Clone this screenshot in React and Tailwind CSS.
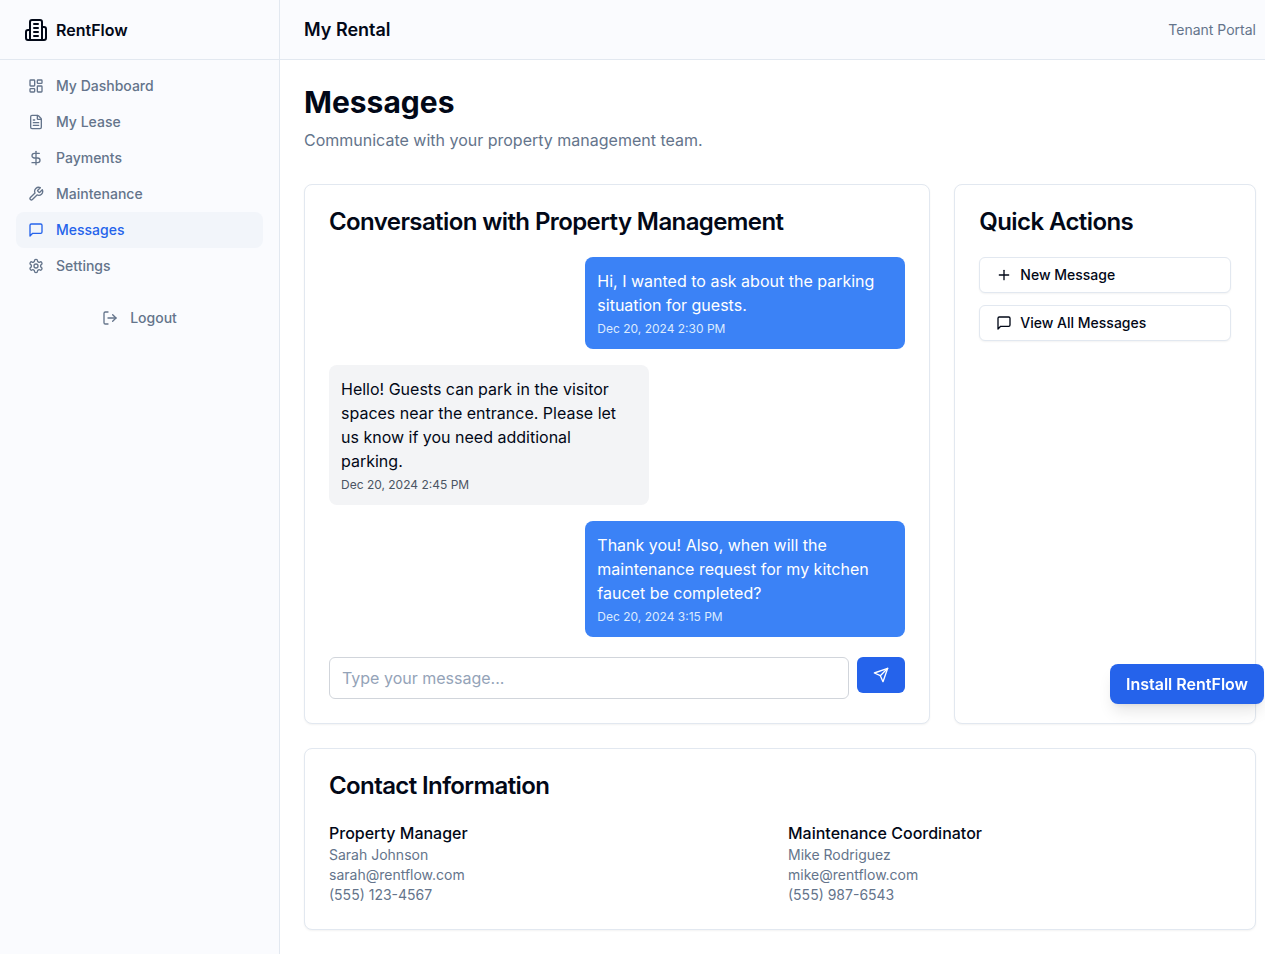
import React from "react";
import { LayoutDashboard, FileText, DollarSign, LogOut, Plus } from "lucide-react";

function Ico({ className, children }) {
  return (
    <svg xmlns="http://www.w3.org/2000/svg" viewBox="0 0 24 24" fill="none" stroke="currentColor" strokeWidth="2" strokeLinecap="round" strokeLinejoin="round" className={className}>
      {children}
    </svg>
  );
}
const Building = (p) => (
  <Ico {...p}>
    <path d="M6 22V4a2 2 0 0 1 2-2h8a2 2 0 0 1 2 2v18Z" />
    <path d="M6 12H4a2 2 0 0 0-2 2v6a2 2 0 0 0 2 2h2" />
    <path d="M18 9h2a2 2 0 0 1 2 2v9a2 2 0 0 1-2 2h-2" />
    <path d="M10 6h4" /><path d="M10 10h4" /><path d="M10 14h4" /><path d="M10 18h4" />
  </Ico>
);
const Message = (p) => (
  <Ico {...p}><path d="M21 15a2 2 0 0 1-2 2H7l-4 4V5a2 2 0 0 1 2-2h14a2 2 0 0 1 2 2z" /></Ico>
);
const Wrench = (p) => (
  <Ico {...p}><path d="M14.7 6.3a1 1 0 0 0 0 1.4l1.6 1.6a1 1 0 0 0 1.4 0l3.77-3.77a6 6 0 0 1-7.94 7.94l-6.91 6.91a2.12 2.12 0 0 1-3-3l6.91-6.91a6 6 0 0 1 7.94-7.94l-3.76 3.76z" /></Ico>
);
const Gear = (p) => (
  <Ico {...p}>
    <path d="M12.22 2h-.44a2 2 0 0 0-2 2v.18a2 2 0 0 1-1 1.73l-.43.25a2 2 0 0 1-2 0l-.15-.08a2 2 0 0 0-2.73.73l-.22.38a2 2 0 0 0 .73 2.73l.15.1a2 2 0 0 1 1 1.72v.51a2 2 0 0 1-1 1.74l-.15.09a2 2 0 0 0-.73 2.73l.22.38a2 2 0 0 0 2.73.73l.15-.08a2 2 0 0 1 2 0l.43.25a2 2 0 0 1 1 1.73V20a2 2 0 0 0 2 2h.44a2 2 0 0 0 2-2v-.18a2 2 0 0 1 1-1.73l.43-.25a2 2 0 0 1 2 0l.15.08a2 2 0 0 0 2.73-.73l.22-.39a2 2 0 0 0-.73-2.73l-.15-.08a2 2 0 0 1-1-1.74v-.5a2 2 0 0 1 1-1.74l.15-.09a2 2 0 0 0 .73-2.73l-.22-.38a2 2 0 0 0-2.73-.73l-.15.08a2 2 0 0 1-2 0l-.43-.25a2 2 0 0 1-1-1.73V4a2 2 0 0 0-2-2z" />
    <circle cx="12" cy="12" r="3" />
  </Ico>
);
const SendIcon = (p) => (
  <Ico {...p}><path d="m22 2-7 20-4-9-9-4Z" /><path d="M22 2 11 13" /></Ico>
);

const nav = [
  ["My Dashboard", LayoutDashboard],
  ["My Lease", FileText],
  ["Payments", DollarSign],
  ["Maintenance", Wrench],
  ["Messages", Message, true],
  ["Settings", Gear],
];

function Bubble({ mine, text, time }) {
  return (
    <div className={mine ? "flex justify-end" : "flex justify-start"}>
      <div className={mine ? "w-[320px] rounded-lg bg-[#3b82f6] p-3 text-white" : "w-[320px] rounded-lg bg-[#f3f4f6] p-3 text-[#020817]"}>
        <p className="text-base leading-6">{text}</p>
        <p className={mine ? "mt-1 text-xs leading-4 text-[#dbeafe]" : "mt-1 text-xs leading-4 text-[#4b5563]"}>{time}</p>
      </div>
    </div>
  );
}

function Contact({ title, name, email, phone }) {
  return (
    <div>
      <h4 className="text-base font-medium leading-6 text-[#020817]">{title}</h4>
      <p className="text-sm leading-5 text-[#64748b]">{name}</p>
      <p className="text-sm leading-5 text-[#64748b]">{email}</p>
      <p className="text-sm leading-5 text-[#64748b]">{phone}</p>
    </div>
  );
}

export default function App() {
  return (
    <div className="flex min-h-[954px] bg-white font-['Inter',sans-serif] text-[#020817]">
      <aside className="w-[280px] shrink-0 border-r border-[#e2e8f0] bg-[#fafbfe]">
        <div className="flex h-[60px] items-center gap-2 border-b border-[#e2e8f0] px-6">
          <Building className="h-6 w-6 text-[#020817]" />
          <span className="text-base font-semibold">RentFlow</span>
        </div>
        <nav className="flex flex-col px-4 pt-2">
          {nav.map(([label, Icon, active]) => (
            <a key={label} className={active
              ? "flex h-9 items-center gap-3 rounded-lg bg-[#f2f5fa] px-3 text-sm font-medium text-[#2563eb]"
              : "flex h-9 items-center gap-3 rounded-lg px-3 text-sm font-medium text-[#64748b]"}>
              <Icon className="h-4 w-4" strokeWidth={2} />
              <span>{label}</span>
            </a>
          ))}
          <button className="mt-4 flex h-9 items-center justify-center gap-3 text-sm font-medium text-[#64748b]">
            <LogOut className="h-4 w-4" />
            <span>Logout</span>
          </button>
        </nav>
      </aside>
      <div className="min-w-0 flex-1">
        <header className="flex h-[60px] items-center justify-between border-b border-[#e2e8f0] bg-[#fafbfe] pl-6 pr-[9px]">
          <h1 className="text-lg font-semibold">My Rental</h1>
          <span className="text-sm text-[#64748b]">Tenant Portal</span>
        </header>
        <main className="pl-6 pr-[9px] pt-6">
          <h2 className="text-3xl font-bold leading-9">Messages</h2>
          <p className="mt-2 text-base leading-6 text-[#64748b]">Communicate with your property management team.</p>
          <div className="mt-8 grid grid-cols-[626.33px_1fr] gap-6">
            <section className="h-[540px] rounded-lg border border-[#e2e8f0] bg-white p-6 shadow-xs">
              <h3 className="text-2xl font-semibold leading-[26px] tracking-tight">Conversation with Property Management</h3>
              <div className="mt-[22px] flex flex-col gap-4">
                <Bubble mine text="Hi, I wanted to ask about the parking situation for guests." time="Dec 20, 2024 2:30 PM" />
                <Bubble text="Hello! Guests can park in the visitor spaces near the entrance. Please let us know if you need additional parking." time="Dec 20, 2024 2:45 PM" />
                <Bubble mine text="Thank you! Also, when will the maintenance request for my kitchen faucet be completed?" time="Dec 20, 2024 3:15 PM" />
              </div>
              <div className="mt-5 flex items-start gap-2">
                <input placeholder="Type your message..." className="h-[42px] min-w-0 flex-1 rounded-md border border-[#d1d5db] bg-white px-3 text-base outline-none placeholder:text-[#94a3b8]" />
                <button className="flex h-9 w-12 shrink-0 items-center justify-center rounded-md bg-[#2563eb] text-white">
                  <SendIcon className="h-4 w-4" />
                </button>
              </div>
            </section>
            <section className="rounded-lg border border-[#e2e8f0] bg-white p-6 shadow-xs">
              <h3 className="text-2xl font-semibold leading-[26px] tracking-tight">Quick Actions</h3>
              <div className="mt-[22px] flex flex-col gap-3">
                <button className="flex h-9 items-center gap-2 rounded-md border border-[#e2e8f0] bg-white px-4 text-sm font-medium shadow-xs">
                  <Plus className="h-4 w-4" />New Message
                </button>
                <button className="flex h-9 items-center gap-2 rounded-md border border-[#e2e8f0] bg-white px-4 text-sm font-medium shadow-xs">
                  <Message className="h-4 w-4" />View All Messages
                </button>
              </div>
            </section>
          </div>
          <section className="mt-6 h-[182px] rounded-lg border border-[#e2e8f0] bg-white p-6 shadow-xs">
            <h3 className="text-2xl font-semibold leading-[26px] tracking-tight">Contact Information</h3>
            <div className="mt-[22px] grid grid-cols-2 gap-4">
              <Contact title="Property Manager" name="Sarah Johnson" email="sarah@rentflow.com" phone="(555) 123-4567" />
              <Contact title="Maintenance Coordinator" name="Mike Rodriguez" email="mike@rentflow.com" phone="(555) 987-6543" />
            </div>
          </section>
        </main>
      </div>
      <button className="fixed bottom-[250px] right-px h-10 rounded-lg bg-[#2563eb] px-4 text-base font-semibold text-white shadow-lg">Install RentFlow</button>
    </div>
  );
}
